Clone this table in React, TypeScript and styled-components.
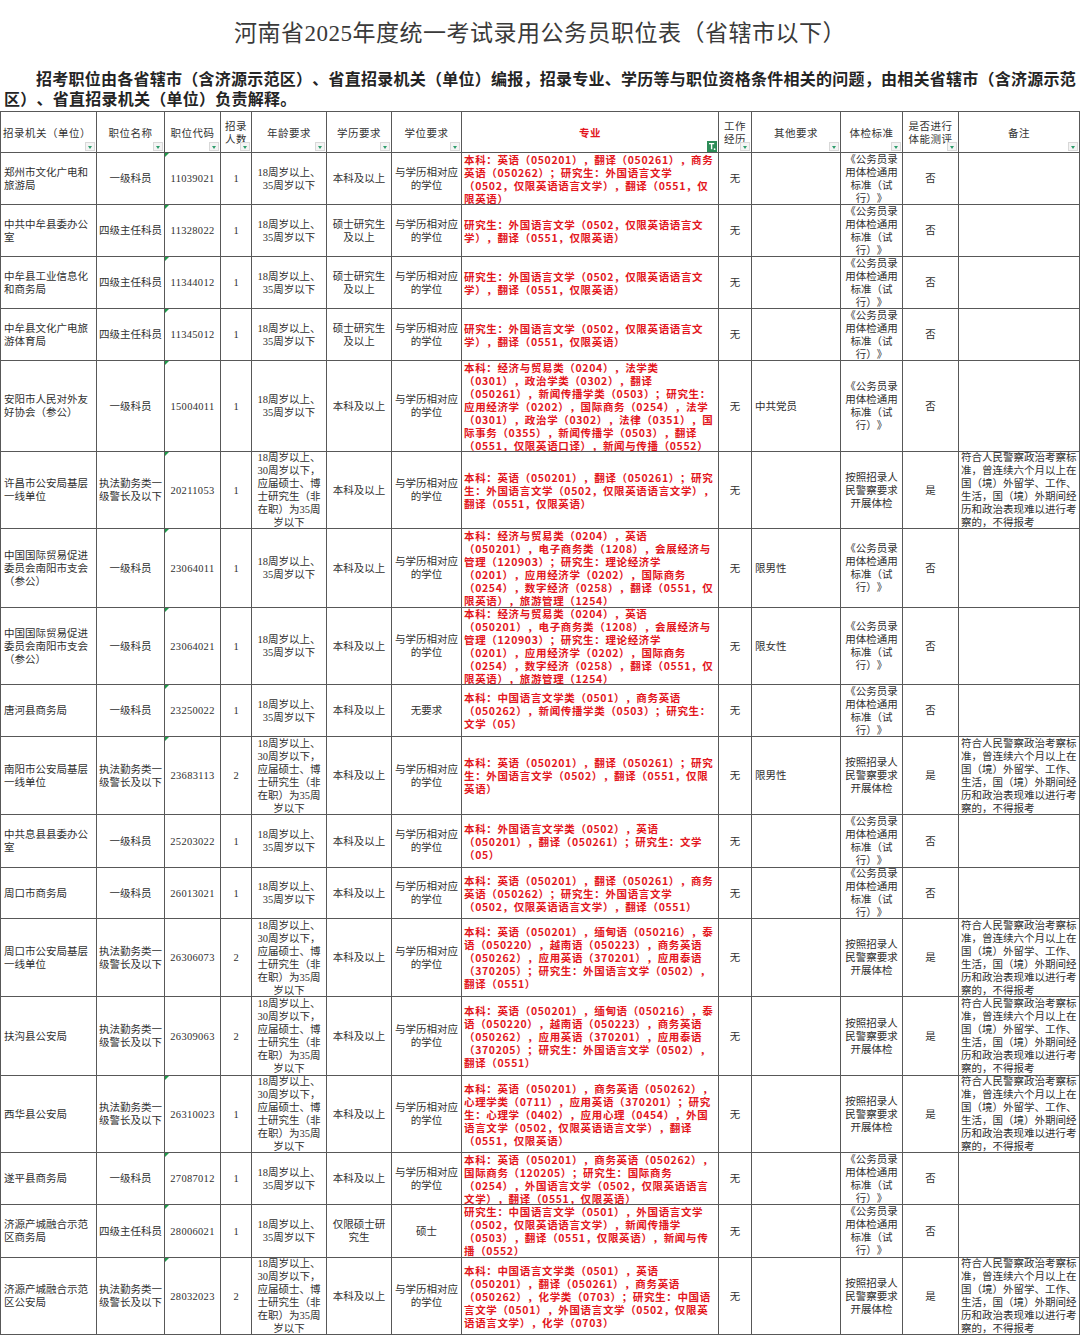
import React from 'react';
import styled, { createGlobalStyle } from 'styled-components';

/*** GLOBAL ***/
const GlobalStyle = createGlobalStyle`
  html, body {
    margin: 0;
    padding: 0;
    background: #fff;
  }
  body {
    font-family: "Noto Sans CJK SC", "Noto Sans", sans-serif;
    text-spacing-trim: space-all;
  }
`;

// column widths taken from the sheet grid lines
const COLS = [96, 68, 56, 31, 75, 65, 70, 257, 33, 89, 62, 56, 121];
const gridCols = COLS.map((w) => `${w}px`).join(' ');
const LINE = '#585858';

/*** PAGE ***/
const Page = styled.div`
  width: 1080px;
`;

const Title = styled.h1`
  margin: 0;
  height: 67px;
  line-height: 67px;
  text-align: center;
  font-family: "Liberation Serif", "Noto Sans CJK SC", serif;
  font-size: 23px;
  font-weight: 400;
  letter-spacing: 0.5px;
  color: #3a3a3a;
`;

const Intro = styled.p`
  margin: 0;
  padding: 1px 0 3px 4px;
  font-size: 16px;
  line-height: 20px;
  letter-spacing: 0.25px;
  font-weight: 700;
  color: #242424;
  text-indent: 32px;
  white-space: nowrap;
  overflow: hidden;
`;

/*** SHEET ***/
const Sheet = styled.div`
  width: 1079px;
  border-left: 1px solid ${LINE};
  border-top: 1px solid ${LINE};
`;

const Row = styled.div<{ $h: number }>`
  display: grid;
  grid-template-columns: ${gridCols};
  height: ${(p) => p.$h}px;
`;

const Cell = styled.div<{ $align?: 'left' | 'center'; $pad?: number }>`
  position: relative;
  box-sizing: border-box;
  border-right: 1px solid ${LINE};
  border-bottom: 1px solid ${LINE};
  display: flex;
  align-items: center;
  justify-content: ${(p) => (p.$align === 'left' ? 'flex-start' : 'center')};
  text-align: ${(p) => p.$align || 'center'};
  padding: 0 ${(p) => p.$pad ?? 1}px;
  overflow: hidden;
  white-space: pre;
  font-family: "Liberation Serif", "Noto Sans CJK SC", serif;
  font-size: 10.5px;
  line-height: 13px;
  color: #303030;
`;

const HeadCell = styled(Cell)<{ $red?: boolean }>`
  letter-spacing: 0.5px;
  font-family: "Noto Sans CJK SC", sans-serif;
  color: ${(p) => (p.$red ? '#e3161d' : '#333')};
  font-weight: ${(p) => (p.$red ? 700 : 400)};
`;

const CodeCell = styled(Cell)<{ $mark?: boolean }>`
  letter-spacing: 0.3px;
  &::before {
    content: "";
    display: ${(p) => (p.$mark ? 'block' : 'none')};
    position: absolute;
    left: 0;
    top: 0;
    border-top: 4px solid #1f9a4a;
    border-right: 4px solid transparent;
  }
`;

const MajorCell = styled(Cell)`
  justify-content: flex-start;
  text-align: left;
  padding: 0 0 0 2px;
  font-family: "Noto Sans CJK SC", sans-serif;
  font-weight: 700;
  letter-spacing: 0.65px;
  color: #e3161d;
`;

// filter dropdown button of the sheet header
const FilterBtn = styled.span`
  position: absolute;
  right: 1px;
  bottom: 1px;
  width: 10px;
  height: 9px;
  box-sizing: border-box;
  background: #f4f4f4;
  border: 1px solid #d8d8d8;
  &::after {
    content: "";
    position: absolute;
    left: 2px;
    top: 3px;
    border-left: 2.5px solid transparent;
    border-right: 2.5px solid transparent;
    border-top: 3px solid #2e9d6c;
  }
`;

const ActiveFilter = styled.svg`
  position: absolute;
  right: 1px;
  bottom: 0;
`;

/*** DATA ***/
const AGE = '18周岁以上、\n35周岁以下';
const AGE_POLICE = '18周岁以上、\n30周岁以下，\n应届硕士、博\n士研究生（非\n在职）为35周\n岁以下';
const DEGREE = '与学历相对应\n的学位';
const EXAM = '《公务员录\n用体检通用\n标准（试\n行）》';
const EXAM_POLICE = '按照招录人\n民警察要求\n开展体检';
const POLICE_TITLE = '执法勤务类一\n级警长及以下';
const NOTE =
  '符合人民警察政治考察标\n准，曾连续六个月以上在\n国（境）外留学、工作、\n生活，国（境）外期间经\n历和政治表现难以进行考\n察的，不得报考';

const HEADERS = [
  '招录机关（单位）', '职位名称', '职位代码', '招录\n人数', '年龄要求', '学历要求', '学位要求',
  '专业', '工作\n经历', '其他要求', '体检标准', '是否进行\n体能测评', '备注',
];

type Job = {
  org: string;
  title: string;
  code: string;
  n: string;
  edu: string;
  degree: string;
  major: string;
  other?: string;
  police?: boolean;
  mark?: boolean;
  h: number;
};

const GRAD_MAJOR = '研究生：外国语言文学（0502，仅限英语语言文\n学），翻译（0551，仅限英语）';
const CCPIT_MAJOR =
  '本科：经济与贸易类（0204），英语\n（050201），电子商务类（1208），会展经济与\n管理（120903）；研究生：理论经济学\n（0201），应用经济学（0202），国际商务\n（0254），数字经济（0258），翻译（0551，仅\n限英语），旅游管理（1254）';
const SEA_MAJOR =
  '本科：英语（050201），缅甸语（050216），泰\n语（050220），越南语（050223），商务英语\n（050262），应用英语（370201），应用泰语\n（370205）；研究生：外国语言文学（0502），\n翻译（0551）';

const JOBS: Job[] = [
  {
    org: '郑州市文化广电和\n旅游局', title: '一级科员', code: '11039021', n: '1', edu: '本科及以上', degree: DEGREE,
    major: '本科：英语（050201），翻译（050261），商务\n英语（050262）；研究生：外国语言文学\n（0502，仅限英语语言文学），翻译（0551，仅\n限英语）',
    mark: true, h: 52,
  },
  { org: '中共中牟县委办公\n室', title: '四级主任科员', code: '11328022', n: '1', edu: '硕士研究生\n及以上', degree: DEGREE, major: GRAD_MAJOR, mark: true, h: 52 },
  { org: '中牟县工业信息化\n和商务局', title: '四级主任科员', code: '11344012', n: '1', edu: '硕士研究生\n及以上', degree: DEGREE, major: GRAD_MAJOR, mark: true, h: 52 },
  { org: '中牟县文化广电旅\n游体育局', title: '四级主任科员', code: '11345012', n: '1', edu: '硕士研究生\n及以上', degree: DEGREE, major: GRAD_MAJOR, mark: true, h: 52 },
  {
    org: '安阳市人民对外友\n好协会（参公）', title: '一级科员', code: '15004011', n: '1', edu: '本科及以上', degree: DEGREE,
    major: '本科：经济与贸易类（0204），法学类\n（0301），政治学类（0302），翻译\n（050261），新闻传播学类（0503）；研究生：\n应用经济学（0202），国际商务（0254），法学\n（0301），政治学（0302），法律（0351），国\n际事务（0355），新闻传播学（0503），翻译\n（0551，仅限英语口译），新闻与传播（0552）',
    other: '中共党员', mark: true, h: 91,
  },
  {
    org: '许昌市公安局基层\n一线单位', title: POLICE_TITLE, code: '20211053', n: '1', edu: '本科及以上', degree: DEGREE,
    major: '本科：英语（050201），翻译（050261）；研究\n生：外国语言文学（0502，仅限英语语言文学），\n翻译（0551，仅限英语）',
    police: true, mark: true, h: 77,
  },
  { org: '中国国际贸易促进\n委员会南阳市支会\n（参公）', title: '一级科员', code: '23064011', n: '1', edu: '本科及以上', degree: DEGREE, major: CCPIT_MAJOR, other: '限男性', mark: true, h: 79 },
  { org: '中国国际贸易促进\n委员会南阳市支会\n（参公）', title: '一级科员', code: '23064021', n: '1', edu: '本科及以上', degree: DEGREE, major: CCPIT_MAJOR, other: '限女性', mark: true, h: 77 },
  {
    org: '唐河县商务局', title: '一级科员', code: '23250022', n: '1', edu: '本科及以上', degree: '无要求',
    major: '本科：中国语言文学类（0501），商务英语\n（050262），新闻传播学类（0503）；研究生：\n文学（05）',
    mark: true, h: 52,
  },
  {
    org: '南阳市公安局基层\n一线单位', title: POLICE_TITLE, code: '23683113', n: '2', edu: '本科及以上', degree: DEGREE,
    major: '本科：英语（050201），翻译（050261）；研究\n生：外国语言文学（0502），翻译（0551，仅限\n英语）',
    other: '限男性', police: true, mark: true, h: 78,
  },
  {
    org: '中共息县县委办公\n室', title: '一级科员', code: '25203022', n: '1', edu: '本科及以上', degree: DEGREE,
    major: '本科：外国语言文学类（0502），英语\n（050201），翻译（050261）；研究生：文学\n（05）',
    h: 53,
  },
  {
    org: '周口市商务局', title: '一级科员', code: '26013021', n: '1', edu: '本科及以上', degree: DEGREE,
    major: '本科：英语（050201），翻译（050261），商务\n英语（050262）；研究生：外国语言文学\n（0502，仅限英语语言文学），翻译（0551）',
    h: 51,
  },
  { org: '周口市公安局基层\n一线单位', title: POLICE_TITLE, code: '26306073', n: '2', edu: '本科及以上', degree: DEGREE, major: SEA_MAJOR, police: true, h: 78 },
  { org: '扶沟县公安局', title: POLICE_TITLE, code: '26309063', n: '2', edu: '本科及以上', degree: DEGREE, major: SEA_MAJOR, police: true, h: 79 },
  {
    org: '西华县公安局', title: POLICE_TITLE, code: '26310023', n: '1', edu: '本科及以上', degree: DEGREE,
    major: '本科：英语（050201），商务英语（050262），\n心理学类（0711），应用英语（370201）；研究\n生：心理学（0402），应用心理（0454），外国\n语言文学（0502，仅限英语语言文学），翻译\n（0551，仅限英语）',
    police: true, mark: true, h: 77,
  },
  {
    org: '遂平县商务局', title: '一级科员', code: '27087012', n: '1', edu: '本科及以上', degree: DEGREE,
    major: '本科：英语（050201），商务英语（050262），\n国际商务（120205）；研究生：国际商务\n（0254），外国语言文学（0502，仅限英语语言\n文学），翻译（0551，仅限英语）',
    mark: true, h: 52,
  },
  {
    org: '济源产城融合示范\n区商务局', title: '四级主任科员', code: '28006021', n: '1', edu: '仅限硕士研\n究生', degree: '硕士',
    major: '研究生：中国语言文学（0501），外国语言文学\n（0502，仅限英语语言文学），新闻传播学\n（0503），翻译（0551，仅限英语），新闻与传\n播（0552）',
    mark: true, h: 53,
  },
  {
    org: '济源产城融合示范\n区公安局', title: POLICE_TITLE, code: '28032023', n: '2', edu: '本科及以上', degree: DEGREE,
    major: '本科：中国语言文学类（0501），英语\n（050201），翻译（050261），商务英语\n（050262），化学类（0703）；研究生：中国语\n言文学（0501），外国语言文学（0502，仅限英\n语语言文学），化学（0703）',
    police: true, mark: true, h: 77,
  },
];

/*** COMPONENTS ***/
const FilterActiveIcon = () => (
  <ActiveFilter width="10" height="11" viewBox="0 0 10 11">
    <rect width="10" height="11" fill="#2d8c58" />
    <path d="M2 2.6h5.2M4.6 2.6v5.6" stroke="#fff" strokeWidth="1.4" fill="none" />
    <circle cx="7.6" cy="8.2" r="0.9" fill="#fff" />
  </ActiveFilter>
);

const HeaderRow = () => (
  <Row $h={41}>
    {HEADERS.map((label, i) => {
      const red = label === '专业';
      return (
        <HeadCell key={label} $red={red} $align={i === 0 ? 'left' : 'center'} $pad={i === 0 ? 2 : 1}>
          {label}
          {red ? <FilterActiveIcon /> : <FilterBtn />}
        </HeadCell>
      );
    })}
  </Row>
);

const JobRow = ({ job }: { job: Job }) => (
  <Row $h={job.h}>
    <Cell $align="left" $pad={3}>{job.org}</Cell>
    <Cell>{job.title}</Cell>
    <CodeCell $mark={job.mark}>{job.code}</CodeCell>
    <Cell>{job.n}</Cell>
    <Cell>{job.police ? AGE_POLICE : AGE}</Cell>
    <Cell>{job.edu}</Cell>
    <Cell>{job.degree}</Cell>
    <MajorCell>{job.major}</MajorCell>
    <Cell>无</Cell>
    <Cell $align="left" $pad={3}>{job.other || ''}</Cell>
    <Cell>{job.police ? EXAM_POLICE : EXAM}</Cell>
    <Cell>{job.police ? '是' : '否'}</Cell>
    <Cell $align="left" $pad={2}>{job.police ? NOTE : ''}</Cell>
  </Row>
);

export default function App() {
  return (
    <>
      <GlobalStyle />
      <Page>
        <Title>河南省2025年度统一考试录用公务员职位表（省辖市以下）</Title>
        <Intro>
          招考职位由各省辖市（含济源示范区）、省直招录机关（单位）编报，招录专业、学历等与职位资格条件相关的问题，由相关省辖市（含济源示范
          <br />
          区）、省直招录机关（单位）负责解释。
        </Intro>
        <Sheet>
          <HeaderRow />
          {JOBS.map((job) => (
            <JobRow key={job.code} job={job} />
          ))}
        </Sheet>
      </Page>
    </>
  );
}
